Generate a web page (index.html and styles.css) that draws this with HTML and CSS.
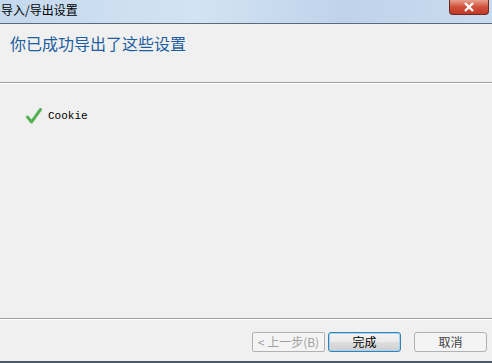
FILE: index.html
```html
<!DOCTYPE html>
<html lang="zh-CN">
  <head>
    <meta charset="UTF-8" />
    <title>导入/导出设置</title>
    <link rel="stylesheet" href="styles.css">
  </head>
  <body>
    <div class="window">
      <div class="titlebar">
        <span class="title">导入/导出设置</span>
        <div class="close">
          <svg width="12" height="10" viewBox="0 0 12 10">
            <path d="M2 1 L10 9 M10 1 L2 9" stroke="#fff" stroke-width="2.4" />
          </svg>
        </div>
      </div>
      <div class="header">
        <h1>你已成功导出了这些设置</h1>
      </div>
      <div class="content">
        <div class="item">
          <svg class="check" width="16" height="16" viewBox="0 0 16 16">
            <path d="M1.5 9 L5.5 14 L14.5 1.5" fill="none" stroke="#5cb85c" stroke-width="3" stroke-linecap="round" stroke-linejoin="round" />
            <path d="M1.5 9 L5.5 14 L14.5 1.5" fill="none" stroke="#3a9a3a" stroke-width="1" stroke-linecap="round" stroke-linejoin="round" opacity="0.6" />
          </svg>
          <span>Cookie</span>
        </div>
      </div>
      <div class="footer">
        <button class="btn" disabled>&lt; 上一步(B)</button>
        <button class="btn primary">完成</button>
        <button class="btn cancel">取消</button>
      </div>
    </div>
  </body>
</html>
```

FILE: styles.css
```css
body {
  margin: 0;
  font-family: "Noto Sans CJK SC", "DejaVu Sans", sans-serif;
  background: #f0f0f0;
}
.window {
  width: 492px;
  height: 363px;
  display: flex;
  flex-direction: column;
  background: #f0f0f0;
  border-bottom: 2px solid #4a5a6a;
  box-sizing: border-box;
  overflow: hidden;
}
.titlebar {
  height: 23px;
  display: flex;
  align-items: flex-start;
  justify-content: space-between;
  background: linear-gradient(90deg, #c4d8ee 0%, #d3e3f3 40%, #bed3ea 70%, #c9dcef 100%);
  border-bottom: 1px solid #5b6b7b;
}
.title {
  font-size: 12px;
  line-height: 20px;
  padding-left: 1px;
  color: #000;
}
.close {
  width: 38px;
  height: 14px;
  margin-right: 3px;
  display: flex;
  align-items: center;
  justify-content: center;
  background: linear-gradient(#e8a090, #d0503a 50%, #c03a28);
  border: 1px solid #6a2a20;
  border-top: none;
  border-radius: 0 0 4px 4px;
}
.header {
  height: 59px;
  background: #f0f0f0;
  border-bottom: 1px solid #a0a0a0;
  box-shadow: 0 1px 0 #fff;
  padding: 9px 0 0 10px;
  box-sizing: border-box;
}
.header h1 {
  margin: 0;
  font-size: 16px;
  font-weight: normal;
  color: #1c5ea0;
  line-height: 20px;
}
.content {
  flex: 1;
  padding: 25px 0 0 26px;
  border-bottom: 1px solid #a0a0a0;
  box-shadow: 0 1px 0 #fff;
}
.item {
  display: flex;
  align-items: center;
  gap: 6px;
  font-family: "Liberation Mono", "DejaVu Sans Mono", monospace;
  font-size: 11px;
}
.footer {
  height: 42px;
  display: flex;
  justify-content: flex-end;
  align-items: flex-start;
  padding: 13px 5px 0 0;
  box-sizing: border-box;
  gap: 3px;
}
.btn {
  width: 73px;
  height: 20px;
  padding: 0;
  font-family: "Noto Sans CJK SC", sans-serif;
  font-size: 12px;
  line-height: 18px;
  color: #000;
  background: linear-gradient(#f2f2f2, #ebebeb 50%, #dddddd 51%, #cfcfcf);
  border: 1px solid #707070;
  border-radius: 3px;
}
.btn:disabled {
  color: #a0a0a0;
  background: #f4f4f4;
  border-color: #adb2b5;
  border-radius: 2px;
}
.primary {
  border-color: #3c7fb1;
  box-shadow: inset 0 0 0 1px #9fd6f4;
}
.cancel {
  margin-left: 10px;
  background: #f4f4f4;
  border-color: #adb2b5;
  color: #404040;
}
```
